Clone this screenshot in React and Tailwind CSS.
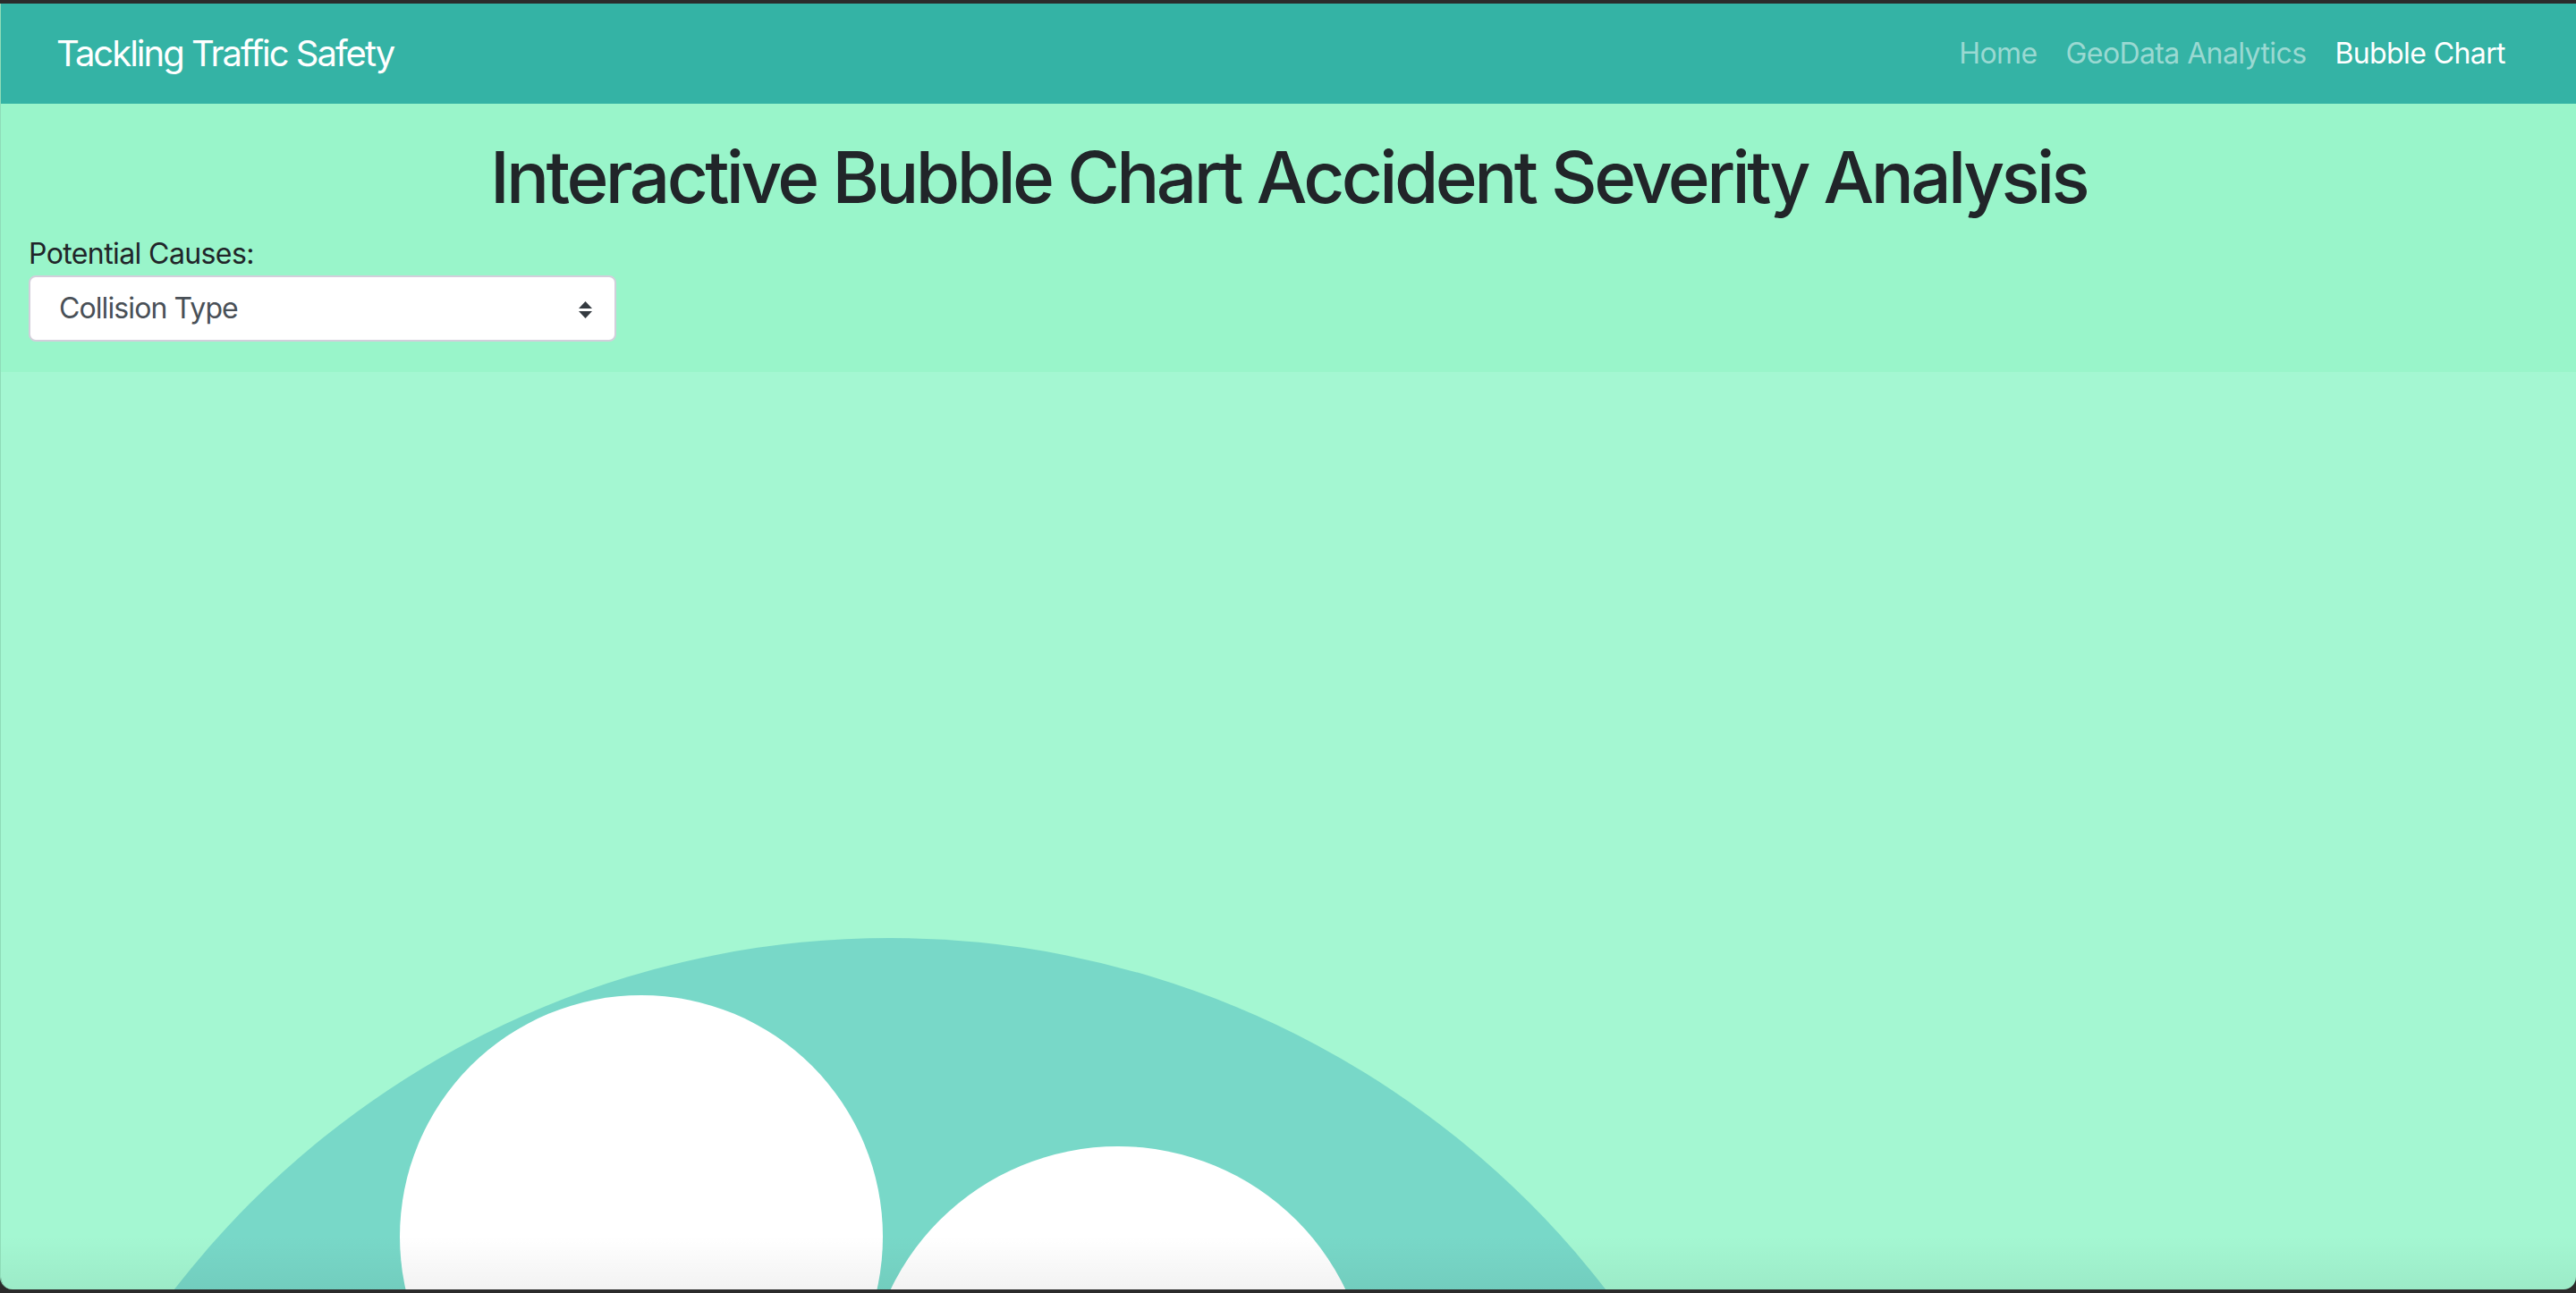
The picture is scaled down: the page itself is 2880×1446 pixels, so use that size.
import React from "react"

const font = { fontFamily: "Inter, 'Noto Sans', sans-serif" }

const NavBar = () => {
    return (
        <nav className="h-[112px] bg-[#34b3a5] pl-[62px] pr-[63px] flex items-center justify-between">
            <a className="text-[40px] text-white leading-none tracking-[-2px]">Tackling Traffic Safety</a>
            <ul className="flex items-center text-[32px] leading-none tracking-[-0.6px]">
                <li><a className="px-[16px] text-[#9ad9d2]">Home</a></li>
                <li><a className="px-[16px] text-[#9ad9d2]">GeoData Analytics</a></li>
                <li><a className="px-[16px] text-white">Bubble Chart</a></li>
            </ul>
        </nav>
    )
}

const SelectArrows = () => (
    <svg width="15" height="20" viewBox="0 0 15 20" className="absolute right-[25px] top-[27px]">
        <polygon points="7.5,0 15,8 0,8" fill="#343a40" />
        <polygon points="0,11 15,11 7.5,19" fill="#343a40" />
    </svg>
)

const Controls = () => {
    return (
        <section className="h-[300px] bg-[#99f5ca] pt-[34px] px-[31px]">
            <h1 className="text-[80px] leading-[96px] font-medium text-[#212529] text-center tracking-[-3.6px]">
                Interactive Bubble Chart Accident Severity Analysis
            </h1>
            <label className="block mt-[14px] text-[32px] leading-[48px] text-[#212529] tracking-[-0.6px]">Potential Causes:</label>
            <div className="relative w-[657px] h-[74px] bg-white border-2 border-[#d3cfdb] rounded-[8px] flex items-center pl-[32px]">
                <span className="text-[32px] text-[#495057] leading-none tracking-[-0.9px]">Collision Type</span>
                <SelectArrows />
            </div>
        </section>
    )
}

const BubbleChart = () => {
    return (
        <section className="relative flex-1 bg-[#a4f7d2] overflow-hidden">
            <svg width="2880" height="1026" viewBox="0 0 2880 1026" className="block">
                <defs>
                    <linearGradient id="fade" x1="0" y1="0" x2="0" y2="1">
                        <stop offset="0" stopColor="#000" stopOpacity="0" />
                        <stop offset="1" stopColor="#000" stopOpacity="0.05" />
                    </linearGradient>
                </defs>
                <circle cx="994" cy="1644" r="1011" fill="#78d8c8" />
                <circle cx="716" cy="967" r="270" fill="#ffffff" />
                <circle cx="1249" cy="1148" r="282" fill="#ffffff" />
                <rect x="0" y="966" width="2880" height="60" fill="url(#fade)" />
            </svg>
        </section>
    )
}

const App = () => {
    return (
        <div className="w-[2880px] h-[1446px] bg-[#2b2b2b] pt-[4px] overflow-hidden" style={font}>
            <div className="h-[1438px] flex flex-col rounded-b-[14px] overflow-hidden border-l border-[#8fdcb8]">
                <NavBar />
                <Controls />
                <BubbleChart />
            </div>
        </div>
    )
}

export default App
